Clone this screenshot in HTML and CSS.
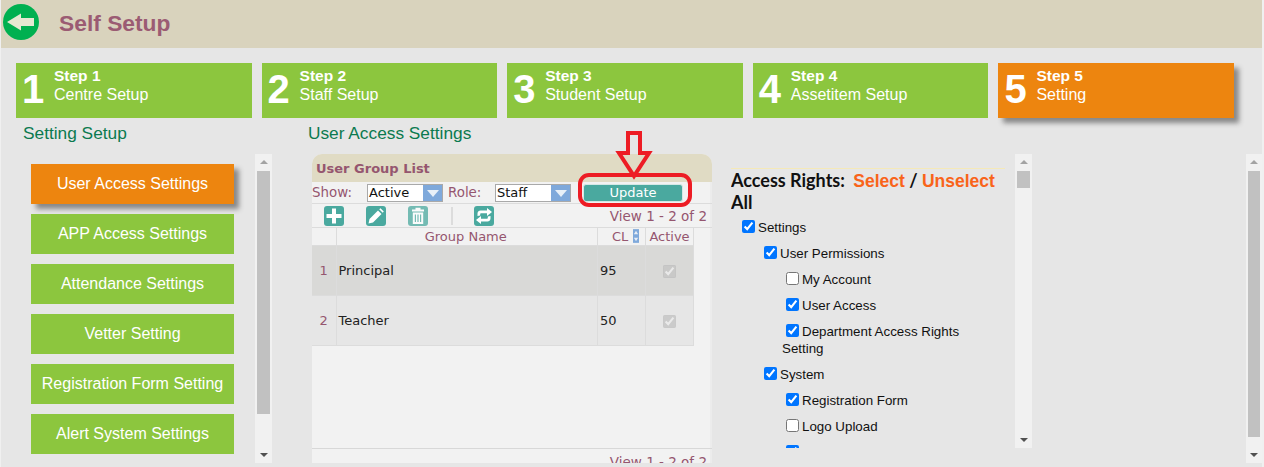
FILE: index.html
```html
<!DOCTYPE html>
<html lang="en">
<head>
<meta charset="utf-8">
<title>Self Setup</title>
<link rel="stylesheet" href="styles.css">
</head>
<body>
<div class="page">
  <header class="topbar">
    <svg class="back" viewBox="0 0 36 36" aria-hidden="true"><circle cx="18" cy="18" r="18" fill="#00b050"/><path d="M4 18 18 9.500V14H31V22H18V26.500Z" fill="#e6e8d2"/></svg>
    <h1 class="title">Self Setup</h1>
  </header>

  <nav class="steps">
    <div class="step"><span class="num">1</span><span class="step-text"><b>Step 1</b>Centre Setup</span></div>
    <div class="step"><span class="num">2</span><span class="step-text"><b>Step 2</b>Staff Setup</span></div>
    <div class="step"><span class="num">3</span><span class="step-text"><b>Step 3</b>Student Setup</span></div>
    <div class="step"><span class="num">4</span><span class="step-text"><b>Step 4</b>Assetitem Setup</span></div>
    <div class="step active"><span class="num">5</span><span class="step-text"><b>Step 5</b>Setting</span></div>
  </nav>

  <div class="headings">
    <h2 class="heading heading-left">Setting Setup</h2>
    <h2 class="heading heading-right">User Access Settings</h2>
  </div>

  <main class="content">
    <div class="menu">
      <a class="menu-btn active">User Access Settings</a>
      <a class="menu-btn">APP Access Settings</a>
      <a class="menu-btn">Attendance Settings</a>
      <a class="menu-btn">Vetter Setting</a>
      <a class="menu-btn">Registration Form Setting</a>
      <a class="menu-btn">Alert System Settings</a>
    </div>
    <div class="sb sb-menu"><i class="up"></i><div class="thumb thumb-menu"></div><i class="down"></i></div>

    <section class="grid">
      <div class="grid-title">User Group List</div>
      <div class="filters">
        <label class="f-label">Show:</label>
        <div class="fake-select sel-show">Active<i></i></div>
        <label class="f-label role">Role:</label>
        <div class="fake-select sel-role">Staff<i></i></div>
        <button class="update">Update</button>
      </div>
      <div class="tools">
        <span class="tool"><svg viewBox="0 0 20 20"><path d="M8 2.500h4V8h5.500v4H12v5.500H8V12H2.500V8H8Z" fill="#fff"/></svg></span>
        <span class="tool"><svg viewBox="0 0 20 20"><path d="M2.500 17.500 3.500 13 12 4.500 15.500 8 7 16.500ZM13.200 3.300 14.500 2.200 17.800 5.500 16.700 6.800Z" fill="#fff"/></svg></span>
        <span class="tool disabled"><svg viewBox="0 0 20 20"><path d="M7.500 1.800h5V3.500H16V5.500H4V3.500H7.500ZM4.800 6.500H15.200V18H4.800ZM6.800 8.500V16H8V8.500ZM9.400 8.500V16H10.600V8.500ZM12 8.500V16H13.200V8.500Z" fill="#fff" fill-rule="evenodd"/></svg></span>
        <span class="tool-sep"></span>
        <span class="tool"><svg viewBox="0 0 20 20"><path d="M3.500 10V7.500C3.500 5.500 5 4.500 6.500 4.500H13V2L18 6 13 10V7.200H7C6.500 7.200 6.200 7.500 6.200 8V9.500ZM16.500 10V12.500C16.500 14.500 15 15.500 13.500 15.500H7V18L2 14 7 10V12.800H13C13.500 12.800 13.800 12.500 13.800 12V10.500Z" fill="#fff"/></svg></span>
        <span class="view">View 1 - 2 of 2</span>
      </div>
      <table class="list">
        <thead>
          <tr>
            <th class="c-n"></th>
            <th class="c-name">Group Name</th>
            <th class="c-cl">CL<svg class="sort" viewBox="0 0 7 16" aria-hidden="true"><rect width="7" height="16" fill="#7fa9db"/><path d="M1 6 3.500 2 6 6ZM1 10 3.500 14 6 10Z" fill="#e8eef6"/></svg></th>
            <th class="c-act">Active</th>
          </tr>
        </thead>
        <tbody>
          <tr class="sel"><td class="rn">1</td><td>Principal</td><td>95</td><td class="ck"><input type="checkbox" checked disabled></td></tr>
          <tr><td class="rn">2</td><td>Teacher</td><td>50</td><td class="ck"><input type="checkbox" checked disabled></td></tr>
        </tbody>
      </table>
      <div class="grid-foot">View 1 - 2 of 2</div>
    </section>

    <section class="rights">
      <div class="rights-title">Access Rights: <a>Select</a> / <a>Unselect</a> All</div>
      <ul class="tree">
        <li><input type="checkbox" checked>Settings
          <ul>
            <li><input type="checkbox" checked>User Permissions
              <ul>
                <li><input type="checkbox">My Account</li>
                <li><input type="checkbox" checked>User Access</li>
                <li><input type="checkbox" checked>Department Access Rights Setting</li>
              </ul>
            </li>
            <li><input type="checkbox" checked>System
              <ul>
                <li><input type="checkbox" checked>Registration Form</li>
                <li><input type="checkbox">Logo Upload</li>
                <li><input type="checkbox" checked>Support Account</li>
              </ul>
            </li>
          </ul>
        </li>
      </ul>
    </section>
    <div class="sb sb-rights"><i class="up"></i><div class="thumb thumb-rights"></div><i class="down"></i></div>

    <div class="sb sb-page"><i class="up"></i><div class="thumb thumb-page"></div><i class="down"></i></div>
  </main>

  <svg class="annotation" viewBox="0 0 114 76" aria-hidden="true">
    <path d="M50 2H62V22H71L56 45 41 22H50Z" fill="none" stroke="#ed1c24" stroke-width="4"/>
    <rect x="2" y="44" width="110" height="30" rx="9" fill="none" stroke="#ed1c24" stroke-width="4"/>
  </svg>
</div>
</body>
</html>
```
FILE: styles.css
```css
html, body { margin: 0; height: 100%; background: #f0f0f0; overflow: hidden; }
* { box-sizing: border-box; }

.page {
  position: relative;
  width: 1261px;
  height: 467px;
  margin-left: 1px;
  background: #e6e6e6;
  font-family: "Liberation Sans", Arial, sans-serif;
  overflow: hidden;
}

.topbar {
  display: flex;
  align-items: flex-start;
  height: 48px;
  background: #d9d3bd;
  padding: 4px 0 0 2px;
}
.back { width: 36px; height: 36px; flex: none; }
.title {
  margin: 6px 0 0 20px;
  font-size: 22.800px;
  line-height: 27px;
  font-weight: bold;
  color: #9b5b73;
}

.steps {
  display: flex;
  gap: 10px;
  margin: 15px 0 0 15px;
}
.step {
  display: flex;
  width: 235.6px;
  height: 55px;
  background: #8cc63e;
  color: #fff;
}
.step.active {
  background: #ed850f;
  box-shadow: 5px 5px 5px #888;
}
.num {
  width: 38px;
  padding: 3px 0 0 6px;
  font-size: 40px;
  line-height: 46px;
  font-weight: bold;
}
.step-text {
  display: block;
  padding-top: 3px;
  font-size: 16px;
  line-height: 18px;
}
.step-text b { display: block; margin-bottom: 1px; font-size: 15.500px; line-height: 19px; }

.headings { display: flex; height: 36px; }
.heading {
  margin: 6px 0 0;
  font-size: 17.300px;
  line-height: 19px;
  font-weight: normal;
  color: #0b7a4f;
}
.heading-left { margin-left: 22px; width: 285px; }

.content { display: flex; align-items: flex-start; height: 309px; }

.menu {
  display: flex;
  flex-direction: column;
  gap: 10px;
  width: 203px;
  margin: 10px 0 0 30px;
}
.menu-btn {
  display: block;
  height: 40px;
  background: #8cc63e;
  color: #fff;
  font-size: 16px;
  line-height: 39px;
  text-align: center;
  white-space: nowrap;
}
.menu-btn.active {
  background: #ed850f;
  box-shadow: 5px 5px 5px #888;
}

.sb {
  position: relative;
  flex: none;
  width: 17px;
  background: #f1f1f1;
  padding: 17px 2px;
}
.thumb { background: #c1c1c1; }
.sb i { position: absolute; left: 50%; margin-left: -4px; width: 0; height: 0; border-left: 4px solid transparent; border-right: 4px solid transparent; }
.sb .up { top: 6px; border-bottom: 4px solid #a3a3a3; }
.sb .down { bottom: 6px; border-top: 4px solid #505050; }

.sb-menu { height: 309px; margin-left: 21px; }
.thumb-menu { height: 243px; }
.sb-rights { height: 294px; }
.thumb-rights { height: 17px; }
.sb-page { height: 309px; width: 16px; margin-left: auto; }
.thumb-page { height: 266px; }

.grid {
  flex: none;
  width: 400px;
  height: 309px;
  margin-left: 40px;
  background: linear-gradient(to left, #ececec 2px, #f2f2f2 2px);
  border-radius: 10px 10px 0 0;
  font-family: "DejaVu Sans", Verdana, sans-serif;
  font-size: 13px;
  overflow: hidden;
}
.grid-title {
  height: 28px;
  padding: 7px 0 0 4px;
  background: #e0dbc4;
  color: #95566f;
  font-size: 13px;
  line-height: 15px;
  font-weight: bold;
}
.filters {
  display: flex;
  align-items: center;
  height: 22px;
  border-bottom: 1px solid #dcdcdc;
  color: #95566f;
  font-size: 13.400px;
}
.f-label { width: 55px; }
.f-label.role { width: 47px; margin-left: 5px; }
.fake-select {
  position: relative;
  width: 76px;
  height: 18px;
  padding-left: 1px;
  background: #fff;
  border: 1px solid #a9a9a9;
  color: #111;
  font-size: 13px;
  line-height: 16px;
}
.fake-select i {
  position: absolute;
  top: 0;
  right: 0;
  width: 19px;
  height: 16px;
  background: #7fa9db;
}
.fake-select i::after {
  content: "";
  position: absolute;
  top: 5px;
  left: 4px;
  border-left: 6px solid transparent;
  border-right: 6px solid transparent;
  border-top: 7px solid #e8f0f8;
}
.update {
  width: 100px;
  height: 18px;
  margin-left: 12px;
  padding: 0;
  border: 1px solid #d5e8e5;
  border-radius: 3px;
  background: #4aa99f;
  color: #fff;
  font: 13px/16px "DejaVu Sans", Verdana, sans-serif;
}
.tools {
  display: flex;
  align-items: center;
  height: 24px;
  padding: 1px 0 0 12px;
  border-bottom: 1px solid #dcdcdc;
}
.tool {
  width: 20px;
  height: 20px;
  margin-right: 22px;
  background: #4aa99f;
  border-radius: 3px;
}
.tool svg { display: block; width: 20px; height: 20px; }
.tool.disabled { opacity: .75; margin-right: 23px; }
.tool-sep { width: 2px; height: 18px; margin-right: 21px; background: #dcdcdc; }
.view { margin-left: auto; margin-right: 5px; color: #95566f; font-size: 13.500px; }

.list {
  width: 382px;
  border-collapse: collapse;
  table-layout: fixed;
  color: #222;
  font-size: 13px;
}
.list th {
  height: 17px;
  padding: 0;
  font-weight: normal;
  color: #95566f;
  border-right: 1px solid #dcdcdc;
  border-bottom: 1px solid #dcdcdc;
}
.c-n { width: 24px; }
.list th.c-name { padding-right: 2px; }
.list th.c-cl { width: 48px; padding-left: 14px; text-align: left; white-space: nowrap; }
.c-act { width: 48px; }
.sort {
  display: inline-block;
  width: 6px;
  height: 16px;
  margin-left: 5px;
  vertical-align: -3px;
}
.list td {
  height: 50px;
  padding: 0 0 0 2px;
  background: #e6e6e6;
  border-right: 1px solid #dcdcdc;
  border-bottom: 1px solid #dcdcdc;
}
.list .sel td { background: #d9d9d7; }
.list td.rn { padding: 0; text-align: center; color: #95566f; }
.list td.ck { padding: 0; text-align: center; }
.list input { margin: 0; vertical-align: middle; }

.grid-foot {
  height: 16px;
  margin-top: 102px;
  padding: 6px 5px 0 0;
  border-top: 1px solid #d8d8d8;
  color: #95566f;
  font-size: 13.500px;
  line-height: 15px;
  text-align: right;
}

.rights {
  flex: none;
  width: 284px;
  height: 294px;
  margin-left: 19px;
  padding-top: 14px;
  overflow: hidden;
  color: #111;
  font-size: 13.330px;
}
.rights-title {
  border-top: 1px solid #f5e9b8;
  width: 274px;
  font-family: Lato, sans-serif;
  font-size: 18px;
  line-height: 22px;
  font-weight: bold;
}
.rights-title a {
  margin-left: 4px;
  color: #f9641a;
  font-family: "Liberation Sans", Arial, sans-serif;
  font-size: 17.500px;
  line-height: 1;
}
.rights-title a + a { margin-left: 0; }
.tree, .tree ul { list-style: none; margin: 0; padding: 0 0 0 22px; }
.tree { padding-left: 7px; width: 255px; }
.tree li { line-height: 17px; margin-top: 7px; }
.tree > li { margin-top: 4px; }
.tree input { margin: 3px 3px 3px 4px; vertical-align: -1px; }

.annotation {
  position: absolute;
  left: 577px;
  top: 131px;
  width: 114px;
  height: 76px;
}
```
